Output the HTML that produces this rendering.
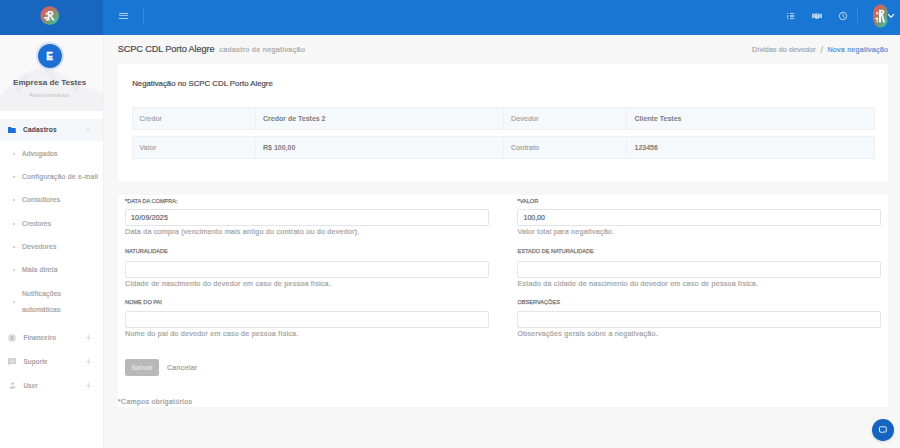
<!DOCTYPE html>
<html><head><meta charset="utf-8">
<style>
*{box-sizing:border-box;margin:0;padding:0}
html,body{width:900px;height:448px;overflow:hidden;background:#f7f7f7;font-family:"Liberation Sans",sans-serif;position:relative}
.a{position:absolute;white-space:nowrap;line-height:1;-webkit-text-stroke:0.2px currentColor}
#hdrL{position:absolute;left:0;top:0;width:103px;height:35px;background:#1866bf}
#hdrR{position:absolute;left:103px;top:0;width:797px;height:35px;background:#1976d2}
#side{position:absolute;left:0;top:35px;width:103px;height:413px;background:#fff}
#prof{position:absolute;left:0;top:35px;width:103px;height:76px;background:#f3f4f6;overflow:hidden}
.card{position:absolute;background:#fff}
.cell{position:absolute;background:#f6f9fc;border:1px solid #edf0f4}
.inp{position:absolute;background:#fff;border:1px solid #e3e5ea;border-radius:2px;height:17px;width:364px}
.lbl{font-weight:normal;font-size:5.6px;color:#777;letter-spacing:0;-webkit-text-stroke:0.25px #777}
.help{font-size:7.2px;color:#a4a4a4;letter-spacing:0.2px}
.mi{font-size:6.8px;color:#a2a2a2;letter-spacing:0.18px}
.a[style*="bold"]{-webkit-text-stroke:0}
.bul{position:absolute;left:12.8px;width:2px;height:2px;background:#d3d3d7}
</style></head><body>
<div id="hdrL"></div>
<div id="hdrR"></div>
<!-- logo -->
<svg style="position:absolute;left:34px;top:2px" width="30" height="30" viewBox="0 0 30 30">
<defs><linearGradient id="lg" x1="0.15" y1="0.1" x2="0.85" y2="0.9"><stop offset="0" stop-color="#ec5a5a"/><stop offset="0.45" stop-color="#a47c68"/><stop offset="1" stop-color="#33c297"/></linearGradient></defs>
<circle cx="15.75" cy="13.7" r="9.4" fill="url(#lg)"/>
<g fill="#f4fbf8">
<path d="M13.7 9H17.2A2.4 2.4 0 0 1 17.6 13.75L20.9 18.4H18.7L15.6 13.8H15.6V18.4H13.7Z M15.6 10.6V12.3H16.9A0.85 0.85 0 0 0 16.9 10.6Z"/>
<rect x="11.7" y="10.7" width="2" height="2"/>
<rect x="10" y="15" width="3.7" height="1.7"/>
<rect x="12" y="16.7" width="1.7" height="2"/>
</g>
</svg>
<!-- hamburger -->
<div style="position:absolute;left:119px;top:13px;width:9px;height:1px;background:rgba(255,255,255,.66)"></div>
<div style="position:absolute;left:119px;top:15px;width:9px;height:1px;background:rgba(255,255,255,.55)"></div>
<div style="position:absolute;left:119px;top:18px;width:9px;height:1px;background:rgba(255,255,255,.66)"></div>
<div style="position:absolute;left:143px;top:8px;width:1px;height:15px;background:rgba(255,255,255,.15)"></div>
<!-- header right icons -->
<svg style="position:absolute;left:786px;top:12px" width="10" height="8" viewBox="0 0 10 8" fill="none" stroke="rgba(255,255,255,.7)" stroke-width="0.9">
<path d="M1.2 1.5h1.1M4 1.5h4.3M1.2 3.4L2.2 3.9L1.2 4.9h1.1M4 3.6h4.3M4 4.7h4.3M1.2 6.6h1.1M4 6.6h4.3"/></svg>
<svg style="position:absolute;left:812px;top:13px" width="10" height="6" viewBox="0 0 10 6" fill="rgba(255,255,255,.7)">
<path d="M0 0.8L1.7 0.5V5.2L0 5Z"/>
<path d="M10 0.8L8.3 0.5V5.2L10 5Z"/>
<path d="M2.1 1L4.2 0.2L5.6 0.6L7.9 1V4.4L6.4 5.8H3.8L2.1 4.6Z"/>
<path d="M3.6 2.2L5 1.3L6.6 2.3" stroke="rgba(25,118,210,.8)" stroke-width="0.5" fill="none"/>
</svg>
<svg style="position:absolute;left:838px;top:11px" width="10" height="10" viewBox="0 0 10 10" fill="none" stroke="rgba(255,255,255,.72)" stroke-width="0.95">
<circle cx="5" cy="5" r="3.7"/><path d="M5 2.7V5.2L6.7 6.6"/></svg>
<div style="position:absolute;left:857px;top:8px;width:1px;height:15px;background:rgba(255,255,255,.15)"></div>
<svg style="position:absolute;left:866px;top:2px" width="32" height="28" viewBox="0 0 32 28">
<defs><linearGradient id="lg2" x1="0.1" y1="0.1" x2="0.9" y2="0.9"><stop offset="0" stop-color="#ec5a5a"/><stop offset="0.45" stop-color="#a47c68"/><stop offset="1" stop-color="#33c297"/></linearGradient></defs>
<path d="M14.2 2.5C18.6 2.5 21.4 6 21.6 9.6C20.6 12 20.6 16 21.7 18.6C21.6 22 18.6 25.6 14.2 25.6C9.9 25.6 6.8 20.5 6.8 14C6.8 7.5 9.9 2.5 14.2 2.5Z" fill="url(#lg2)"/>
<g fill="#f4fbf8">
<path d="M13 7.8H16.2A2.2 2.2 0 0 1 16.8 12.1L19.2 20.6H17.1L14.9 12.3H15V20.6H13Z M15 9.4V10.7H16A0.65 0.65 0 0 0 16 9.4Z"/>
<rect x="10.3" y="10.2" width="1.9" height="2.2"/>
<rect x="9.5" y="15.7" width="2.7" height="2"/>
<rect x="10.5" y="18.4" width="1.5" height="1.9"/>
</g>
</svg>
<svg style="position:absolute;left:887px;top:13px" width="8" height="6" viewBox="0 0 8 6" fill="none" stroke="#fff" stroke-width="1.2"><path d="M1 1.2L4 4.2L7 1.2"/></svg>

<!-- sidebar -->
<div id="side"></div>
<div style="position:absolute;left:103px;top:35px;width:2px;height:413px;background:linear-gradient(90deg,rgba(0,0,0,.035),rgba(0,0,0,0))"></div>
<div id="prof">
<svg width="103" height="77" viewBox="0 0 103 77" style="position:absolute;left:0;top:0">
<rect width="103" height="77" fill="#f9f9fa"/>
<path d="M0 60 L8 53 L16 45 L24 39 L32 35 L40 32 L46 31 L52 34 L60 38 L70 44 L82 50 L95 55 L103 57 V76 H0 Z" fill="#f2f2f4"/>
<path d="M14 50 L24 41 L30 40 L26 48 L18 58 Z M44 33 L52 37 L58 44 L54 50 L48 42 Z M70 48 L80 52 L76 58 Z" fill="#ececef"/>
</svg>
</div>
<div style="position:absolute;left:35.5px;top:41.5px;width:28px;height:28px;border-radius:50%;background:#d3e2f5"></div>
<div style="position:absolute;left:37.5px;top:43.5px;width:24px;height:24px;border-radius:50%;background:#1d6fd4"></div>
<div class="a" style="left:46.3px;top:52px;font-size:10px;font-weight:bold;color:#fff;-webkit-text-stroke:0.35px #fff">E</div>
<div class="a" style="left:13px;top:78.6px;font-size:8.1px;font-weight:bold;color:#55555c">Empresa de Testes</div>
<div class="a" style="left:29px;top:92.1px;font-size:6px;color:#bdbdbd;letter-spacing:0.28px;-webkit-text-stroke:0">Administrador</div>

<div style="position:absolute;left:0;top:119px;width:103px;height:21.5px;background:#f4f6fa"></div>
<svg style="position:absolute;left:8.2px;top:127px" width="7.8" height="6.2" viewBox="0 0 8 7" preserveAspectRatio="none"><path d="M0 0.6Q0 0 0.6 0H3L3.8 1H7.4Q8 1 8 1.6V6.4Q8 7 7.4 7H0.6Q0 7 0 6.4Z" fill="#1e6fd9"/></svg>
<div class="a" style="left:23px;top:127px;font-size:6.6px;font-weight:bold;letter-spacing:0.18px;color:#43434d">Cadastros</div>
<div style="position:absolute;left:86px;top:129px;width:4.2px;height:1px;background:#d2d3d8"></div>

<div class="bul" style="top:152.5px"></div><div class="a mi" style="left:22px;top:150.8px">Advogados</div>
<div class="bul" style="top:176px"></div><div class="a mi" style="left:22px;top:174.3px;letter-spacing:0.26px">Configuração de e-mail</div>
<div class="bul" style="top:199px"></div><div class="a mi" style="left:22px;top:197.3px">Consultores</div>
<div class="bul" style="top:222.5px"></div><div class="a mi" style="left:22px;top:220.8px">Credores</div>
<div class="bul" style="top:246px"></div><div class="a mi" style="left:22px;top:244.3px">Devedores</div>
<div class="bul" style="top:269px"></div><div class="a mi" style="left:22px;top:267.3px">Mala direta</div>
<div class="bul" style="top:301px"></div><div class="a mi" style="left:22px;top:290.8px">Notificações</div>
<div class="a mi" style="left:22px;top:307.3px">automáticas</div>

<svg style="position:absolute;left:8px;top:334px" width="8" height="8" viewBox="0 0 8 8"><circle cx="4" cy="4" r="3.7" fill="#d2d2d6"/><circle cx="4" cy="4" r="2.6" fill="none" stroke="#ececee" stroke-width="0.6"/><path d="M5 2.9Q4 2.3 3.2 2.8Q2.7 3.4 3.6 3.8L4.5 4.2Q5.2 4.7 4.6 5.2Q3.8 5.6 3 5.1M4 2V6" fill="none" stroke="#b9b9be" stroke-width="0.6"/></svg>
<div class="a mi" style="left:23.5px;top:335px;font-size:6.4px;letter-spacing:0;font-weight:bold;color:#a3a3a3">Financeiro</div>
<svg style="position:absolute;left:85.5px;top:335px" width="5" height="5" viewBox="0 0 5 5" stroke="#d3d5dc" stroke-width="0.8"><path d="M2.5 0V5M0 2.5H5"/></svg>

<svg style="position:absolute;left:8px;top:358px" width="8" height="8" viewBox="0 0 8 8"><path d="M0 0H8V6H1.8L0.4 7.6H0Z" fill="#cfcfd4"/><rect x="2.2" y="1.5" width="4.2" height="3.2" fill="#e2e2e6"/><path d="M2.6 4.2L5.6 1.8" stroke="#c4c4c9" stroke-width="0.6"/></svg>
<div class="a mi" style="left:23.5px;top:359px;font-size:6.4px;letter-spacing:0;font-weight:bold;color:#a3a3a3">Suporte</div>
<svg style="position:absolute;left:85.5px;top:358.5px" width="5" height="5" viewBox="0 0 5 5" stroke="#d3d5dc" stroke-width="0.8"><path d="M2.5 0V5M0 2.5H5"/></svg>

<svg style="position:absolute;left:8.8px;top:382px" width="7" height="7" viewBox="0 0 7 7" fill="#c9c9ce"><circle cx="3.5" cy="1.6" r="1.4"/><path d="M0.3 6.4Q0.6 4.4 3.5 4.3Q6.4 4.4 6.7 6.4Z"/></svg>
<div class="a mi" style="left:23.5px;top:383px;font-size:6.4px;letter-spacing:0;font-weight:bold;color:#a3a3a3">User</div>
<svg style="position:absolute;left:85.5px;top:382.5px" width="5" height="5" viewBox="0 0 5 5" stroke="#d3d5dc" stroke-width="0.8"><path d="M2.5 0V5M0 2.5H5"/></svg>

<!-- subheader -->
<div class="a" style="left:117.7px;top:44.8px;font-size:9.2px;letter-spacing:-0.12px;color:#44444a;-webkit-text-stroke:0.15px #44444a">SCPC CDL Porto Alegre</div>
<div class="a" style="left:219.3px;top:45.9px;font-size:7.2px;letter-spacing:0.33px;color:#a9a9a9">cadastro de negativação</div>
<div class="a" style="left:752px;top:46px;font-size:7.2px;letter-spacing:0.1px;color:#a5a5a5">Dívidas do devedor</div>
<div class="a" style="left:820.6px;top:46px;font-size:8.6px;color:#9a9a9a;-webkit-text-stroke:0">/</div>
<div class="a" style="left:827.4px;top:46px;font-size:7.2px;letter-spacing:0.2px;color:#5a8ed6">Nova negativação</div>

<!-- card 1 -->
<div class="card" style="left:118px;top:64px;width:770px;height:116.5px"></div>
<div class="a" style="left:132.2px;top:79.5px;font-size:7.8px;color:#4a4a50">Negativação no SCPC CDL Porto Alegre</div>
<div class="cell" style="left:132px;top:107px;width:124px;height:23px"></div>
<div class="cell" style="left:255px;top:107px;width:249px;height:23px"></div>
<div class="cell" style="left:503px;top:107px;width:124px;height:23px"></div>
<div class="cell" style="left:626px;top:107px;width:249px;height:23px"></div>
<div class="cell" style="left:132px;top:136px;width:124px;height:23px"></div>
<div class="cell" style="left:255px;top:136px;width:249px;height:23px"></div>
<div class="cell" style="left:503px;top:136px;width:124px;height:23px"></div>
<div class="cell" style="left:626px;top:136px;width:249px;height:23px"></div>
<div class="a" style="left:139.5px;top:115.1px;font-size:7px;letter-spacing:0.2px;color:#a3a3a3">Credor</div>
<div class="a" style="left:263px;top:115.1px;font-size:7px;font-weight:bold;color:#7c7c7c">Credor de Testes 2</div>
<div class="a" style="left:511px;top:115.1px;font-size:7px;letter-spacing:0.2px;color:#a3a3a3">Devedor</div>
<div class="a" style="left:634.5px;top:115.1px;font-size:7px;font-weight:bold;color:#7c7c7c">Cliente Testes</div>
<div class="a" style="left:139.5px;top:144px;font-size:7px;letter-spacing:0.2px;color:#a3a3a3">Valor</div>
<div class="a" style="left:263px;top:144px;font-size:7px;font-weight:bold;color:#7c7c7c">R$ 100,00</div>
<div class="a" style="left:511px;top:144px;font-size:7px;letter-spacing:0.2px;color:#a3a3a3">Contrato</div>
<div class="a" style="left:634.5px;top:144px;font-size:7px;font-weight:bold;color:#7c7c7c">123456</div>

<!-- card 2 -->
<div class="card" style="left:118px;top:194.5px;width:770px;height:212.5px"></div>
<div class="a lbl" style="left:125px;top:198.6px">*DATA DA COMPRA:</div>
<div class="inp" style="left:125px;top:209px"></div>
<div class="a" style="left:131px;top:213.9px;font-size:7px;letter-spacing:0.2px;color:#5f5f65">10/09/2025</div>
<div class="a help" style="left:125px;top:228.4px">Data da compra (vencimento mais antigo do contrato ou do devedor).</div>
<div class="a lbl" style="left:125px;top:249.1px">NATURALIDADE</div>
<div class="inp" style="left:125px;top:260.5px"></div>
<div class="a help" style="left:125px;top:279.6px">Cidade de nascimento do devedor em caso de pessoa física.</div>
<div class="a lbl" style="left:125px;top:300.3px">NOME DO PAI</div>
<div class="inp" style="left:125px;top:311px"></div>
<div class="a help" style="left:125px;top:330.4px">Nome do pai do devedor em caso de pessoa física.</div>

<div class="a lbl" style="left:517.5px;top:198.6px">*VALOR</div>
<div class="inp" style="left:517px;top:209px"></div>
<div class="a" style="left:523.5px;top:213.9px;font-size:7px;color:#5f5f65">100,00</div>
<div class="a help" style="left:517.5px;top:228.4px">Valor total para negativação.</div>
<div class="a lbl" style="left:517.5px;top:249.1px">ESTADO DE NATURALIDADE</div>
<div class="inp" style="left:517px;top:260.5px"></div>
<div class="a help" style="left:517.5px;top:279.6px">Estado da cidade de nascimento do devedor em caso de pessoa física.</div>
<div class="a lbl" style="left:517.5px;top:300.3px">OBSERVAÇÕES</div>
<div class="inp" style="left:517px;top:311px"></div>
<div class="a help" style="left:517.5px;top:330.4px">Observações gerais sobre a negativação.</div>

<div style="position:absolute;left:125px;top:358.5px;width:34px;height:17px;background:#b8b8b8;border-radius:2px"></div>
<div class="a" style="left:131.4px;top:363.9px;font-size:7px;letter-spacing:0.3px;color:#ececec;-webkit-text-stroke:0.1px #ececec">Salvar</div>
<div class="a" style="left:166.9px;top:363.9px;font-size:7px;letter-spacing:0.3px;color:#a0a0a0">Cancelar</div>
<div class="a" style="left:118px;top:397.5px;font-size:7px;letter-spacing:0.35px;color:#9b9b9b">*Campos obrigatórios</div>

<!-- chat fab -->
<div style="position:absolute;left:872px;top:419px;width:21.5px;height:21.5px;border-radius:50%;background:#1565c0;box-shadow:0 1px 3px rgba(0,0,0,.12)"></div>
<svg style="position:absolute;left:878px;top:425px" width="10" height="10" viewBox="0 0 10 10" fill="none" stroke="#eef3fa" stroke-width="0.95"><path d="M2.4 1.8H7.4Q8.3 1.8 8.3 2.7V6.1Q8.3 7 7.4 7H5.2L4.2 7.9L3.6 7H2.4Q1.5 7 1.5 6.1V2.7Q1.5 1.8 2.4 1.8Z"/></svg>
</body></html>
